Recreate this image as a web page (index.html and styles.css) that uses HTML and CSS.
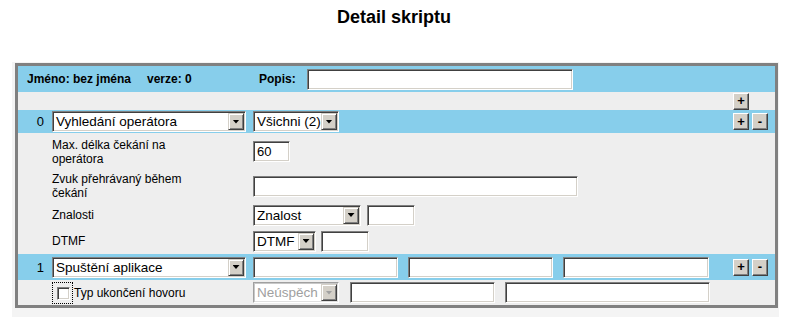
FILE: index.html
```html
<!DOCTYPE html>
<html lang="cs">
<head>
  <meta charset="UTF-8">
  <title>Detail skriptu</title>
  <link rel="stylesheet" href="styles.css">
</head>
<body>

  <h1 class="title">Detail skriptu</h1>

  <div class="panel">
    <div class="script">

      <div class="row head">
        <span class="name">Jméno: bez jména</span>
        <span class="ver">verze: 0</span>
        <span class="popis">Popis:</span>
        <input type="text" class="txt w-popis">
      </div>

      <div class="row add">
        <span class="tools"><button class="btn">+</button></span>
      </div>

      <div class="row step r0">
        <span class="idx">0</span>
        <span class="main">
          <span class="combo w-step"><span class="val">Vyhledání operátora</span><span class="arrow"></span></span>
        </span>
        <span class="rest">
          <span class="combo w-86"><span class="val">Všichni (2)</span><span class="arrow"></span></span>
        </span>
        <span class="tools"><button class="btn">+</button><button class="btn">-</button></span>
      </div>

      <div class="row param r-max">
        <span class="idx"></span>
        <span class="main"><span class="lbl">Max. délka čekání na operátora</span></span>
        <span class="rest"><input type="text" class="txt w-37" value="60"></span>
      </div>

      <div class="row param r-zvuk">
        <span class="idx"></span>
        <span class="main"><span class="lbl">Zvuk přehrávaný během čekání</span></span>
        <span class="rest"><input type="text" class="txt w-325"></span>
      </div>

      <div class="row param r-26">
        <span class="idx"></span>
        <span class="main"><span class="lbl">Znalosti</span></span>
        <span class="rest">
          <span class="combo w-108"><span class="val">Znalost</span><span class="arrow"></span></span>
          <input type="text" class="txt w-48 ml-6">
        </span>
      </div>

      <div class="row param r-26">
        <span class="idx"></span>
        <span class="main"><span class="lbl">DTMF</span></span>
        <span class="rest">
          <span class="combo w-63"><span class="val">DTMF</span><span class="arrow"></span></span>
          <input type="text" class="txt w-48 ml-5">
        </span>
      </div>

      <div class="row step r-26">
        <span class="idx">1</span>
        <span class="main">
          <span class="combo w-step"><span class="val">Spuštění aplikace</span><span class="arrow"></span></span>
        </span>
        <span class="rest">
          <input type="text" class="txt w-145">
          <input type="text" class="txt w-145 ml-10">
          <input type="text" class="txt w-146 ml-10">
        </span>
        <span class="tools"><button class="btn">+</button><button class="btn">-</button></span>
      </div>

      <div class="row param r-last">
        <span class="idx"></span>
        <span class="main">
          <span class="focus"><input type="checkbox" class="chk"></span>
          <span class="chk-lbl">Typ ukončení hovoru</span>
        </span>
        <span class="rest">
          <span class="combo off w-86"><span class="val">Neúspěch</span><span class="arrow"></span></span>
          <input type="text" class="txt w-145 ml-11">
          <input type="text" class="txt w-205 ml-10">
        </span>
      </div>

    </div>
  </div>

</body>
</html>
```

FILE: styles.css
```css
* {
  box-sizing: border-box;
}

body {
  margin: 0;
  font-family: "Liberation Sans", Arial, sans-serif;
  font-size: 12px;
  color: #000;
  background: #fff;
}

.title {
  margin: 7px 0 0;
  font-size: 18px;
  line-height: 21px;
  font-weight: bold;
  text-align: center;
}

.panel {
  width: 767px;
  margin: 34px 0 0 12px;
  padding: 1px 1px 10px 3px;
  background: #f4f4f4;
}

.script {
  border: 3px solid #808080;
  background: #eeeeee;
}

.row {
  display: flex;
  align-items: center;
}

/* header */
.head {
  height: 26px;
  padding-left: 9px;
  background: #87ceeb;
  font-weight: bold;
}

.name { width: 120px; }
.ver { width: 112px; }
.popis { width: 48px; }

.add {
  height: 18px;
  justify-content: flex-end;
}

.step {
  background: #87ceeb;
}

.r0 { height: 23px; }
.r-max { height: 37px; }
.r-zvuk { height: 32px; }
.r-26 { height: 26px; }
.r-last { height: 25px; }

.idx {
  width: 34px;
  padding-right: 8px;
  text-align: right;
  font-size: 13px;
}

.main {
  width: 201px;
  display: flex;
  align-items: center;
}

.rest {
  flex: 1;
  display: flex;
  align-items: center;
}

.lbl {
  width: 150px;
  line-height: 14px;
}

.tools {
  width: 42px;
  padding-right: 7px;
  display: flex;
  gap: 3px;
}

/* form controls, old windows look */
.txt {
  height: 21px;
  margin: 0;
  padding: 0 3px;
  font: 13px "Liberation Sans", Arial, sans-serif;
  background: #fff;
  border: 1px solid;
  border-color: #808080 #fff #fff #808080;
  box-shadow: inset 1px 1px #404040, inset -1px -1px #d4d0c8;
}

.combo {
  height: 21px;
  display: inline-flex;
  padding: 1px;
  background: #fff;
  border: 1px solid;
  border-color: #808080 #fff #fff #808080;
  box-shadow: inset 1px 1px #404040, inset -1px -1px #d4d0c8;
}

.combo .val {
  flex: 1;
  padding-left: 2px;
  font-size: 13.5px;
  line-height: 17px;
  white-space: nowrap;
  overflow: hidden;
}

.combo .arrow {
  flex: none;
  width: 16px;
  height: 17px;
  display: flex;
  align-items: center;
  justify-content: center;
  background: #d4d0c8;
  border: 1px solid;
  border-color: #d4d0c8 #404040 #404040 #d4d0c8;
  box-shadow: inset 1px 1px #fff, inset -1px -1px #808080;
}

.combo .arrow::after {
  content: "";
  width: 7px;
  height: 4px;
  background: #000;
  clip-path: polygon(0 0, 100% 0, 50% 100%);
}

.combo.off {
  border-color: #a0a0a0 #fff #fff #a0a0a0;
  box-shadow: inset 1px 1px #c8c8c8, inset -1px -1px #e0e0e0;
}

.combo.off .val {
  color: #a0a0a0;
}

.combo.off .arrow::after {
  background: #a0a0a0;
}

.btn {
  width: 16px;
  height: 17px;
  padding: 0;
  font: bold 13px/14px "Liberation Sans", Arial, sans-serif;
  color: #000;
  background: #d4d0c8;
  border: 1px solid;
  border-color: #fff #404040 #404040 #fff;
  box-shadow: inset -1px -1px #808080;
}

.focus {
  width: 21px;
  height: 22px;
  padding: 4px 0 0 4px;
  border: 1px dotted #000;
}

.chk {
  appearance: none;
  display: block;
  width: 13px;
  height: 13px;
  margin: 0;
  background: #fff;
  border: 1px solid;
  border-color: #808080 #fff #fff #808080;
  box-shadow: inset 1px 1px #404040, inset -1px -1px #d4d0c8;
}

.chk-lbl {
  margin-left: 1px;
}

.w-popis { width: 266px; }
.w-step { width: 194px; }
.w-86 { width: 86px; }
.w-37 { width: 37px; }
.w-325 { width: 325px; }
.w-108 { width: 108px; }
.w-63 { width: 63px; }
.w-48 { width: 48px; }
.w-145 { width: 145px; }
.w-146 { width: 146px; }
.w-205 { width: 205px; }

.ml-5 { margin-left: 5px; }
.ml-6 { margin-left: 6px; }
.ml-10 { margin-left: 10px; }
.ml-11 { margin-left: 11px; }
```
